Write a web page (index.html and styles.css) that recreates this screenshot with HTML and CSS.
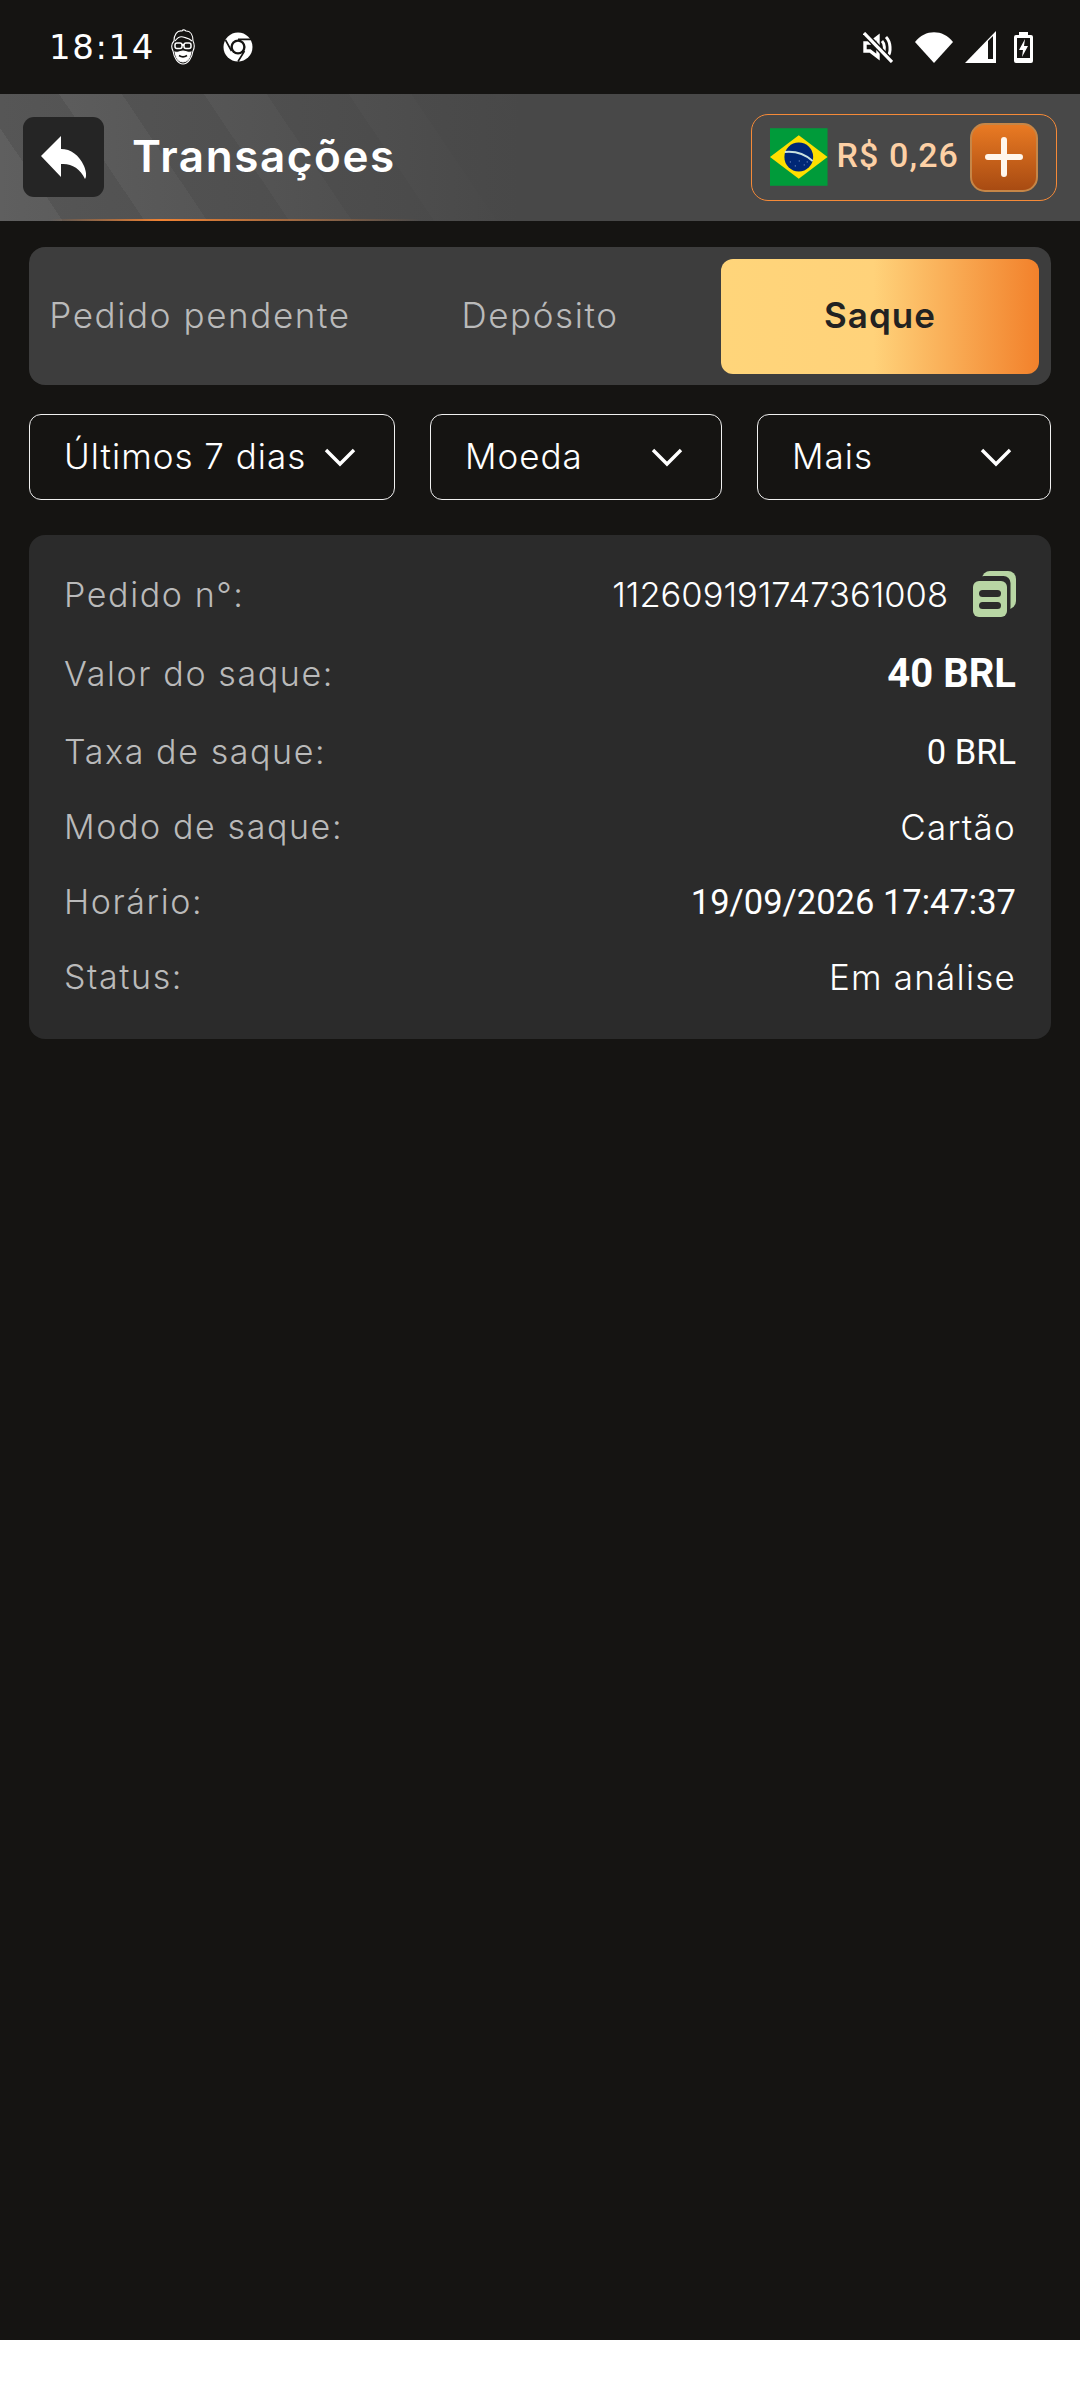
FILE: index.html
```html
<!DOCTYPE html>
<html lang="pt-BR">
  <head>
    <meta charset="utf-8">
    <title>Transações</title>
    <link rel="stylesheet" href="styles.css">
  </head>

  <body>
    <div class="app">
      <div class="statusbar">
        <div class="status-left">
          <span class="clock">18:14</span>
          <svg class="face-icon" viewBox="0 0 24 36" fill="none" stroke="#fff" stroke-width="1.1">
            <path d="M3 12C3 6 6 1 11 2c1-2 3-1 4 0 5 0 7 5 7 10 2 4 1 8 0 10-1 7-5 13-10 13C7 35 3 29 2 22 0 18 1 14 3 12z" />
            <path d="M4 12c3-4 5-5 8-4 3 1 6 1 9 4" />
            <rect x="4" y="14" width="7" height="5.5" rx="2" stroke-width="1.5" />
            <rect x="13" y="14" width="7" height="5.5" rx="2" stroke-width="1.5" />
            <path d="M11 16h2" stroke-width="2" />
            <path d="M4 23c3 1 5-1 8-1s5 2 8 1c-1 6-4 10-8 10s-7-4-8-10z" fill="#fff" />
            <path d="M8 26.5c3 2 5 2 8 0" stroke="#151412" stroke-width="1.6" />
          </svg>
          <svg class="chrome-icon" viewBox="0 0 30 30">
            <circle cx="15" cy="15" r="14.5" fill="#fff" />
            <circle cx="15" cy="15" r="7.6" fill="#151412" />
            <circle cx="15" cy="15" r="5.2" fill="#fff" />
            <path d="M15 7.4H28M8.5 19L2.5 8M21.5 19L15 29.5" stroke="#151412" stroke-width="1.6" />
          </svg>
        </div>
        <div class="status-right">
          <svg class="mute-icon" viewBox="0 0 30 31" fill="none" stroke="#fff">
            <path d="M2 11h5l8-6v20l-8-6H2z" stroke-width="3.4" />
            <path d="M19 9c3 3 3 9 1 12M23 5c5 5 5 15 2 19" stroke-width="3" />
            <path d="M1 1l28 29" stroke="#151412" stroke-width="6" />
            <path d="M1 1l28 29" stroke-width="3.2" />
          </svg>
          <svg class="wifi-icon" viewBox="0 0 38 31">
            <path d="M0 10C10-3 28-3 38 10L19 31z" fill="#fff" />
          </svg>
          <svg class="signal-icon" viewBox="0 0 31 32">
            <path d="M0 32L31 0v32z" fill="#fff" />
            <path d="M23 10l5-5v23h-5z" fill="#151412" />
          </svg>
          <svg class="battery-icon" viewBox="0 0 19 31">
            <path d="M5 0h9v3h3a2 2 0 0 1 2 2v24a2 2 0 0 1-2 2H2a2 2 0 0 1-2-2V5a2 2 0 0 1 2-2h3z" fill="#fff" />
            <rect x="3" y="6" width="13" height="20" fill="#151412" />
            <path d="M11 7L5 18h4l-1 7 6-11h-4z" fill="#fff" />
          </svg>
        </div>
      </div>

      <header class="topbar">
        <div class="topbar-left">
          <button class="back-btn">
            <svg viewBox="0 0 45 43">
              <path d="M20 0L0 20l20 21V28c10-1 19 4 24 15 2-3 1-8-1-13C38 19 30 13 20 13z" fill="#fff" />
            </svg>
          </button>
          <h1 class="page-title">Transações</h1>
        </div>
        <div class="balance">
          <svg class="flag" viewBox="0 0 58 58">
            <rect width="58" height="58" fill="#009b3a" />
            <path d="M0 29L29 7l29 22-29 22z" fill="#fedf00" />
            <circle cx="29" cy="29" r="14.5" fill="#002776" />
            <path d="M15 24c10-1 20 2 28 9" fill="none" stroke="#c8e0e0" stroke-width="2" />
            <path d="M20 34h1M25 38h1M29 33h1M34 37h1M37 34h1" stroke="#8fa8d8" stroke-width="1" />
          </svg>
          <span class="balance-amount">R$ 0,26</span>
          <button class="add-btn">
            <svg viewBox="0 0 38 40">
              <path d="M19 3v34M3 20h32" stroke="#fff6ec" stroke-width="6" stroke-linecap="round" />
            </svg>
          </button>
        </div>
      </header>

      <main class="content">
        <div class="tabs">
          <div class="tab"><span>Pedido pendente</span></div>
          <div class="tab"><span>Depósito</span></div>
          <div class="tab active"><span>Saque</span></div>
        </div>

        <div class="filters">
          <div class="filter">
            <span>Últimos 7 dias</span>
            <svg class="chevron" viewBox="0 0 32 20"><path d="M2 3l14 14L30 3" /></svg>
          </div>
          <div class="filter">
            <span>Moeda</span>
            <svg class="chevron" viewBox="0 0 32 20"><path d="M2 3l14 14L30 3" /></svg>
          </div>
          <div class="filter">
            <span>Mais</span>
            <svg class="chevron" viewBox="0 0 32 20"><path d="M2 3l14 14L30 3" /></svg>
          </div>
        </div>

        <div class="card">
          <div class="row row-order">
            <span class="label">Pedido n°:</span>
            <span class="value order-no">112609191747361008
              <svg class="copy-icon" viewBox="0 0 43 46">
                <rect x="9" y="0" width="34" height="38" rx="8" fill="#b8d6a4" />
                <rect x="4" y="5" width="33.5" height="38" rx="7" fill="#2b2b2b" />
                <rect x="0" y="10" width="34" height="36" rx="6" fill="#b8d6a4" />
                <rect x="6" y="19" width="22" height="7" rx="3.5" fill="#2b2b2b" />
                <rect x="6" y="31" width="22" height="7" rx="3.5" fill="#2b2b2b" />
              </svg>
            </span>
          </div>
          <div class="row row-amount">
            <span class="label">Valor do saque:</span>
            <span class="value num amount">40 BRL</span>
          </div>
          <div class="row">
            <span class="label">Taxa de saque:</span>
            <span class="value num">0 BRL</span>
          </div>
          <div class="row">
            <span class="label">Modo de saque:</span>
            <span class="value">Cartão</span>
          </div>
          <div class="row">
            <span class="label">Horário:</span>
            <span class="value num">19/09/2026 17:47:37</span>
          </div>
          <div class="row">
            <span class="label">Status:</span>
            <span class="value">Em análise</span>
          </div>
        </div>
      </main>
    </div>
  </body>
</html>
```
FILE: styles.css
```css
* {
  box-sizing: border-box;
}

body {
  margin: 0;
  background-color: #fff;
  font-family: Inter, "Liberation Sans", sans-serif;
}

.app {
  height: 2340px;
  background-color: #151412;
  overflow: hidden;
}

/* status bar */
.statusbar {
  height: 94px;
  padding: 0 47px 0 49px;
  display: flex;
  justify-content: space-between;
  align-items: center;
  color: #fff;
}

.status-left,
.status-right {
  display: flex;
  align-items: center;
}

.clock {
  font-family: "DejaVu Sans", sans-serif;
  font-size: 34px;
  letter-spacing: 1.6px;
  width: 122px;
}

.face-icon {
  width: 24px;
  height: 36px;
  margin-right: 28px;
}

.chrome-icon {
  width: 30px;
  height: 30px;
}

.mute-icon {
  width: 30px;
  height: 31px;
  margin-right: 22px;
}

.wifi-icon {
  width: 38px;
  height: 31px;
  margin-right: 12px;
}

.signal-icon {
  width: 31px;
  height: 32px;
  margin-right: 18px;
}

.battery-icon {
  width: 19px;
  height: 31px;
}

/* header */
.topbar {
  position: relative;
  height: 127px;
  padding: 0 23px;
  display: flex;
  justify-content: space-between;
  align-items: center;
  background-color: #484848;
  background-image: linear-gradient(90deg, rgba(72, 72, 72, 0) 0, #484848 520px),
    repeating-linear-gradient(56deg, #5f5f5f 0 52px, #565656 52px 120px);
}

.topbar::after {
  content: "";
  position: absolute;
  left: 50px;
  bottom: 0;
  width: 370px;
  height: 2px;
  background: linear-gradient(90deg, rgba(240, 130, 50, 0), #f08232 30%, rgba(240, 130, 50, 0));
}

.topbar-left {
  display: flex;
  align-items: center;
}

.back-btn {
  width: 81px;
  height: 80px;
  margin: 0 28px 1px 0;
  padding: 0;
  border: none;
  border-radius: 11px;
  background-color: #252525;
  display: flex;
  justify-content: center;
  align-items: center;
}

.back-btn svg {
  width: 45px;
  height: 43px;
}

.page-title {
  margin: 0 0 3px;
  color: #fff;
  font-size: 44px;
  font-weight: 600;
  letter-spacing: 1.6px;
}

.balance {
  width: 306px;
  height: 87px;
  margin-bottom: 1px;
  padding: 0 18px;
  border: 1px solid #f58a38;
  border-radius: 17px;
  display: flex;
  align-items: center;
}

.flag {
  width: 58px;
  height: 58px;
  margin-right: 9px;
}

.balance-amount {
  width: 134px;
  margin-bottom: 4px;
  font-family: Roboto, sans-serif;
  font-size: 34px;
  font-weight: 500;
  letter-spacing: 1.1px;
  color: #fdd0a5;
  white-space: nowrap;
}

.add-btn {
  width: 69px;
  height: 69px;
  padding: 0;
  border: 2px solid #c68647;
  border-radius: 15px;
  background: linear-gradient(180deg, #e97a23, #a84b12);
  display: flex;
  justify-content: center;
  align-items: center;
}

.add-btn svg {
  width: 38px;
  height: 40px;
}

/* page content */
.content {
  padding: 26px 29px 0;
}

.tabs {
  height: 138px;
  padding: 12px 12px 11px;
  border-radius: 16px;
  background-color: #3d3d3d;
  display: grid;
  grid-template-columns: repeat(3, 1fr);
  gap: 22px;
}

.tab {
  border-radius: 12px;
  display: flex;
  justify-content: center;
  align-items: center;
  color: #bababa;
  font-size: 35px;
  font-weight: 300;
  letter-spacing: 1.6px;
  white-space: nowrap;
}

.tab span {
  margin-bottom: 3px;
}

.tab.active {
  color: #222;
  font-weight: 600;
  letter-spacing: 1px;
  background: linear-gradient(90deg, #ffd57a 0, #ffd27a 48%, #f2812b 100%);
}

.filters {
  margin-top: 29px;
  display: grid;
  grid-template-columns: 366px 292px 1fr;
  gap: 35px;
}

.filter {
  height: 86px;
  padding: 0 38px 0 34px;
  border: 1px solid #f0f0f0;
  border-radius: 12px;
  display: flex;
  justify-content: space-between;
  align-items: center;
  color: #fff;
  font-size: 35px;
  font-weight: 300;
  letter-spacing: 1px;
  white-space: nowrap;
}

.filter span {
  margin-bottom: 2px;
}

.chevron {
  width: 32px;
  height: 20px;
  fill: none;
  stroke: #fff;
  stroke-width: 3.4;
}

.card {
  margin-top: 35px;
  padding: 21px 35px 25px;
  border-radius: 16px;
  background-color: #2b2b2b;
}

.row {
  height: 75px;
  display: flex;
  justify-content: space-between;
  align-items: center;
}

.row-order {
  height: 76px;
}

.row-amount {
  height: 82px;
}

.label {
  color: #bababa;
  font-size: 34px;
  font-weight: 300;
  letter-spacing: 1.6px;
}

.value {
  color: #fff;
  font-size: 35px;
  font-weight: 300;
  letter-spacing: 1.2px;
  display: flex;
  align-items: center;
}

.num {
  font-family: Roboto, sans-serif;
  font-weight: 400;
  font-size: 34.5px;
  letter-spacing: 0;
}

.amount {
  font-size: 40px;
  font-weight: 700;
}

.order-no {
  font-size: 34.5px;
  letter-spacing: 0;
}

.copy-icon {
  width: 43px;
  height: 46px;
  margin-left: 25px;
}
```
